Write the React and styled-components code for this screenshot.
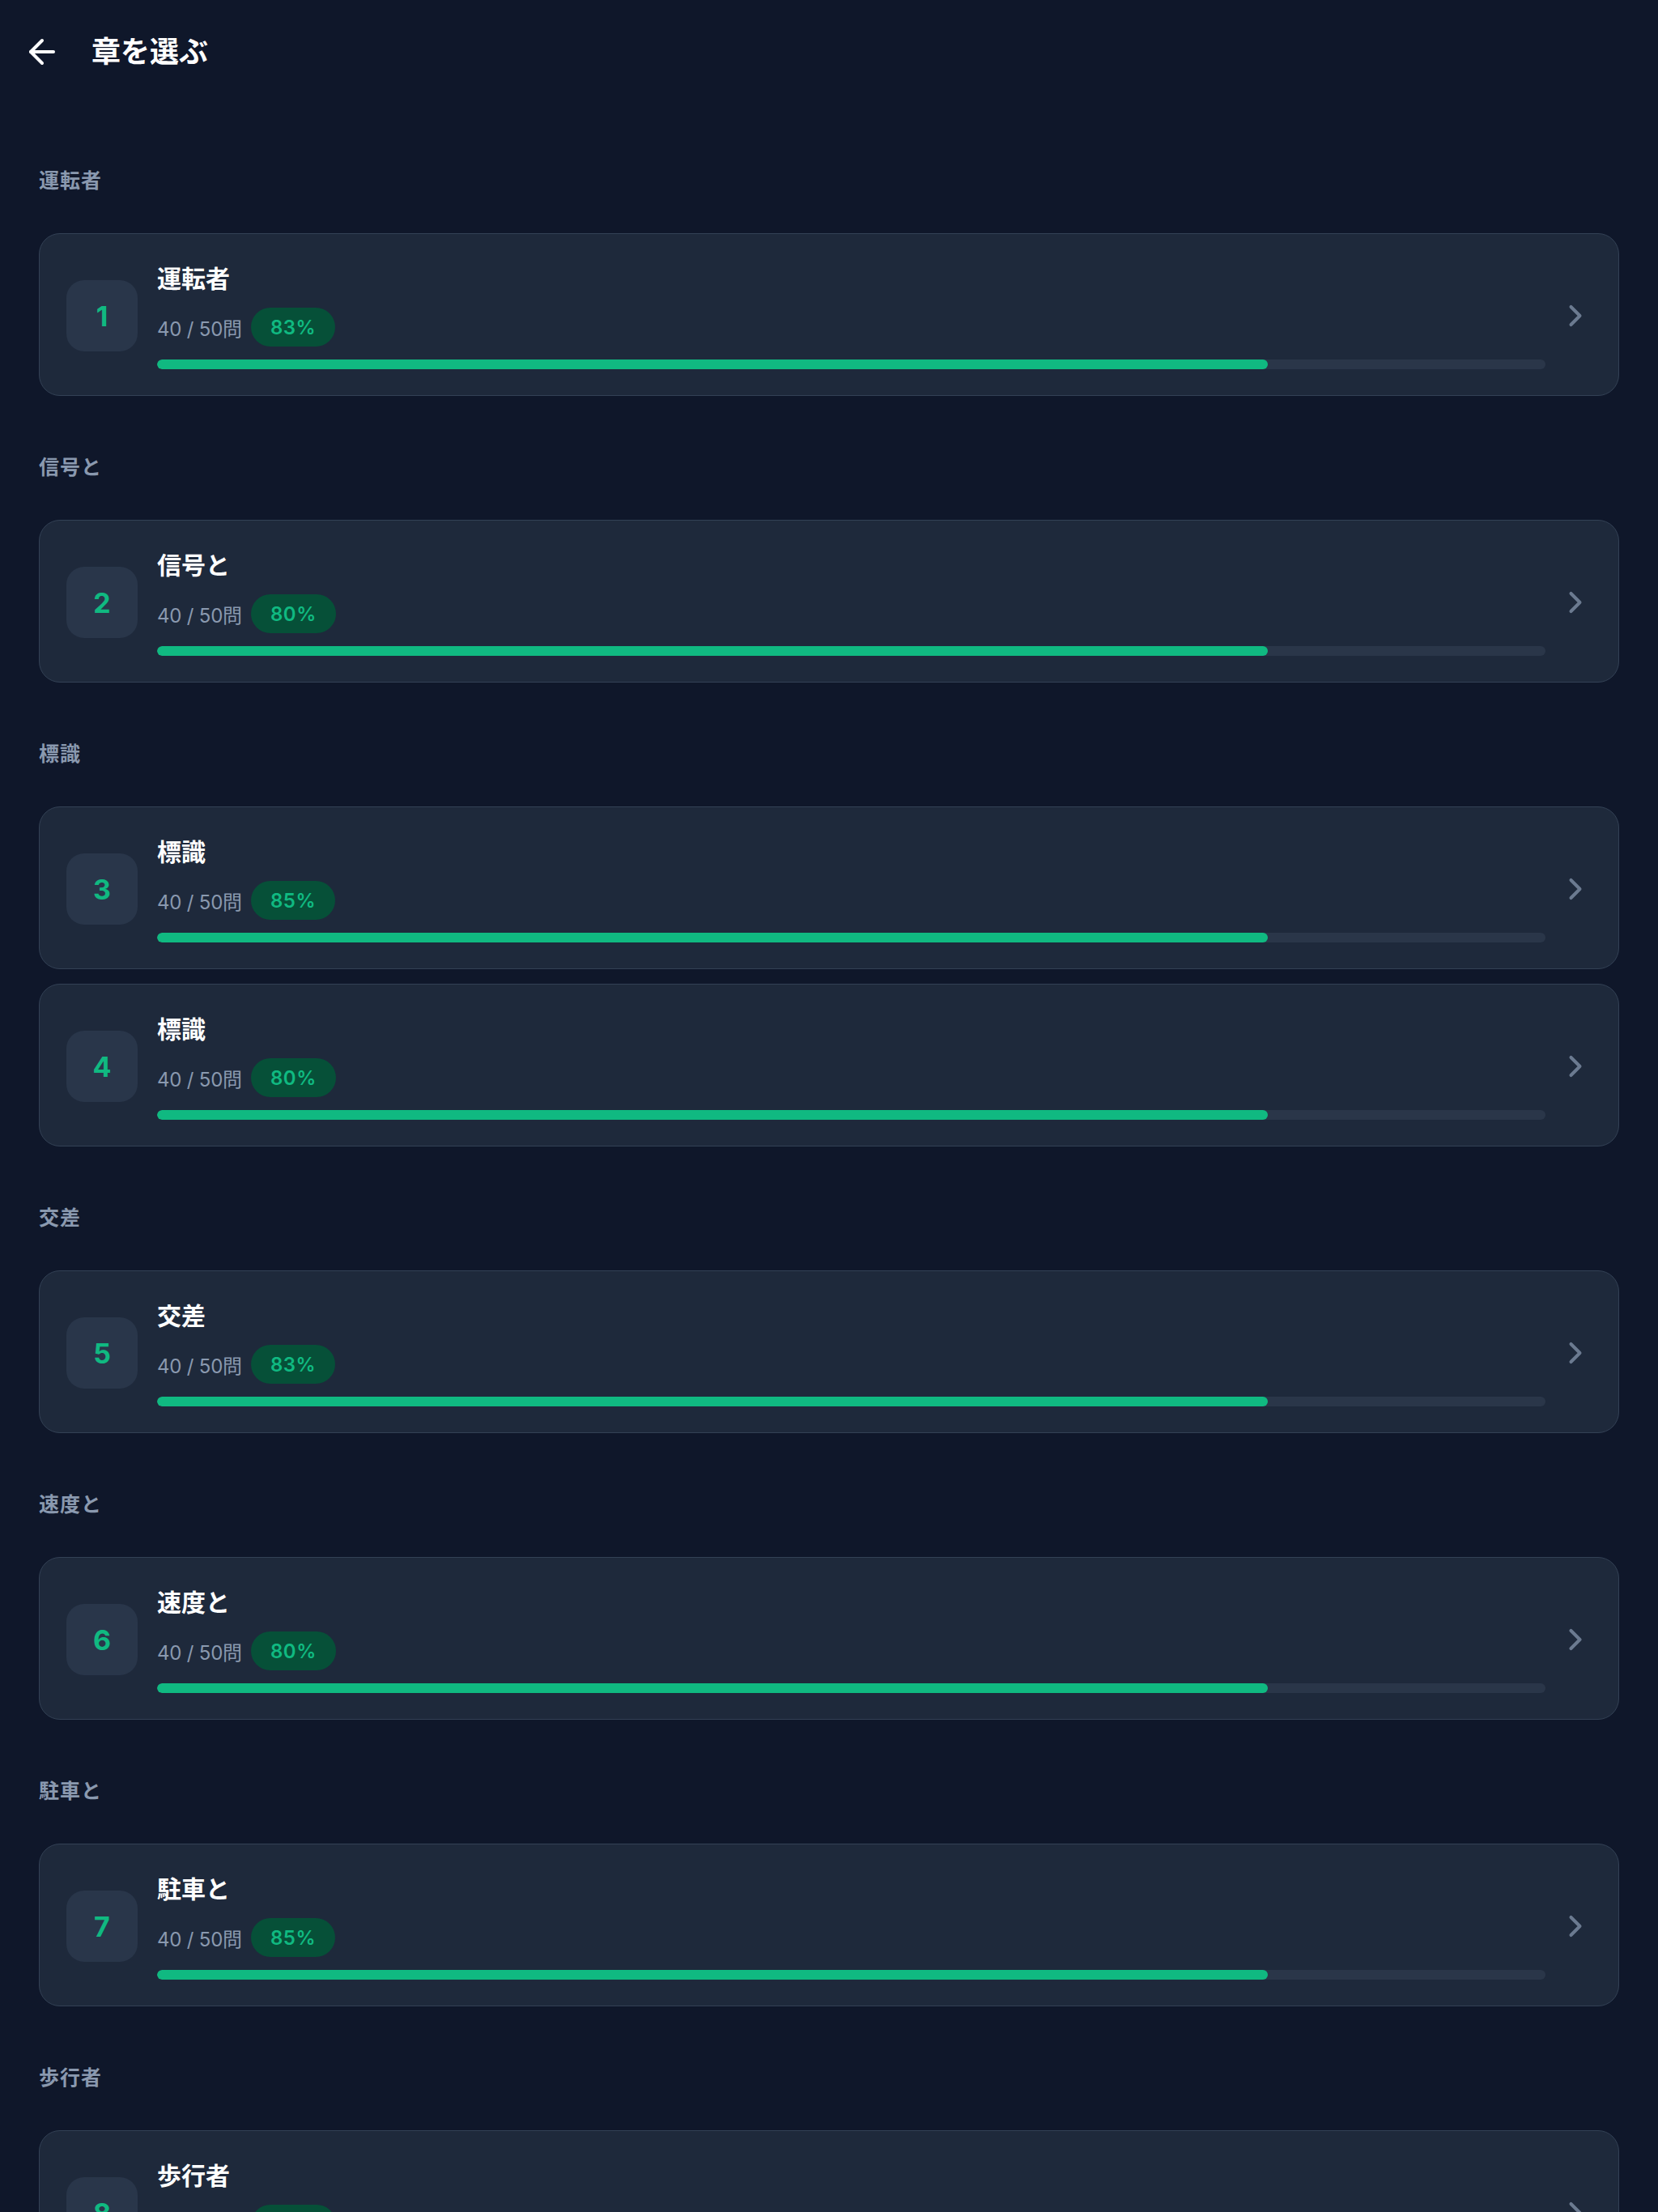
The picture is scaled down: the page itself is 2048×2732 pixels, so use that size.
import React from "react";
import styled, { createGlobalStyle } from "styled-components";
import { ArrowLeft, ChevronRight } from "lucide-react";

const GlobalStyle = createGlobalStyle`
  html, body {
    margin: 0;
    padding: 0;
    background: #0f172a;
  }
  body {
    font-family: Inter, "Noto Sans CJK JP", sans-serif;
    color: #ffffff;
  }
  * { box-sizing: border-box; }
`;

const Page = styled.div`
  min-height: 2732px;
  background: #0f172a;
`;

const Header = styled.header`
  height: 128px;
  display: flex;
  align-items: center;
  gap: 37px;
  padding-left: 28px;
`;

const BackButton = styled.button`
  display: flex;
  align-items: center;
  justify-content: center;
  width: 48px;
  height: 48px;
  padding: 0;
  border: none;
  background: transparent;
  color: #ffffff;
  cursor: pointer;
`;

const Title = styled.h1`
  margin: 0;
  font-size: 36px;
  line-height: 48px;
  font-weight: 700;
  color: #ffffff;
`;

const List = styled.main`
  padding: 7px 48px 48px;
  display: flex;
  flex-direction: column;
`;

const Section = styled.section`
  display: flex;
  flex-direction: column;
  gap: 18px;
  margin-top: 72px;
`;

const SectionLabel = styled.h2`
  margin: 0 0 31px;
  font-size: 25px;
  line-height: 32px;
  font-weight: 700;
  letter-spacing: 1px;
  color: #8a99af;
`;

const Card = styled.div`
  display: flex;
  align-items: center;
  height: 201px;
  padding: 35px 31px 32px 33px;
  background: #1e293b;
  border: 1px solid #334155;
  border-radius: 26px;
`;

const NumberBox = styled.div`
  flex: 0 0 88px;
  width: 88px;
  height: 88px;
  border-radius: 22px;
  background: #29364a;
  display: flex;
  align-items: center;
  justify-content: center;
  font-size: 34px;
  font-weight: 700;
  color: #10b981;
  margin-right: 24px;
`;

const Content = styled.div`
  flex: 1;
  display: flex;
  flex-direction: column;
  gap: 16px;
  min-width: 0;
`;

const CardTitle = styled.div`
  font-size: 30px;
  line-height: 40px;
  font-weight: 700;
  color: #ffffff;
`;

const Meta = styled.div`
  display: flex;
  align-items: center;
  gap: 11px;
  height: 48px;
`;

const Count = styled.span`
  font-size: 24px;
  letter-spacing: -0.2px;
  color: #8a99af;
`;

const Badge = styled.span`
  display: inline-flex;
  align-items: center;
  height: 48px;
  padding: 0 24px;
  border-radius: 24px;
  background: #065038;
  color: #10b981;
  font-size: 24px;
  font-weight: 600;
  letter-spacing: 0.5px;
`;

const Track = styled.div`
  height: 12px;
  border-radius: 6px;
  background: #2a3649;
  overflow: hidden;
`;

const Fill = styled.div`
  height: 100%;
  border-radius: 6px;
  background: #10b981;
`;

const Chevron = styled.div`
  flex: 0 0 44px;
  display: flex;
  align-items: center;
  justify-content: center;
  color: #6b7a90;
  margin-left: 15px;
`;

const sections = [
  { label: "運転者", chapters: [{ n: 1, title: "運転者", pct: 83 }] },
  { label: "信号と", chapters: [{ n: 2, title: "信号と", pct: 80 }] },
  {
    label: "標識",
    chapters: [
      { n: 3, title: "標識", pct: 85 },
      { n: 4, title: "標識", pct: 80 },
    ],
  },
  { label: "交差", chapters: [{ n: 5, title: "交差", pct: 83 }] },
  { label: "速度と", chapters: [{ n: 6, title: "速度と", pct: 80 }] },
  { label: "駐車と", chapters: [{ n: 7, title: "駐車と", pct: 85 }] },
  { label: "歩行者", chapters: [{ n: 8, title: "歩行者", pct: 80 }] },
];

function ChapterCard({ n, title, pct }) {
  return (
    <Card>
      <NumberBox>{n}</NumberBox>
      <Content>
        <CardTitle>{title}</CardTitle>
        <Meta>
          <Count>40 / 50問</Count>
          <Badge>{pct}%</Badge>
        </Meta>
        <Track>
          <Fill style={{ width: "80%" }} />
        </Track>
      </Content>
      <Chevron>
        <ChevronRight size={44} strokeWidth={2.2} />
      </Chevron>
    </Card>
  );
}

export default function App() {
  return (
    <>
      <GlobalStyle />
      <Page>
        <Header>
          <BackButton aria-label="戻る">
            <ArrowLeft size={48} strokeWidth={2} />
          </BackButton>
          <Title>章を選ぶ</Title>
        </Header>
        <List>
          {sections.map((s) => (
            <Section key={s.label}>
              <SectionLabel>{s.label}</SectionLabel>
              {s.chapters.map((c) => (
                <ChapterCard key={c.n} {...c} />
              ))}
            </Section>
          ))}
        </List>
      </Page>
    </>
  );
}
